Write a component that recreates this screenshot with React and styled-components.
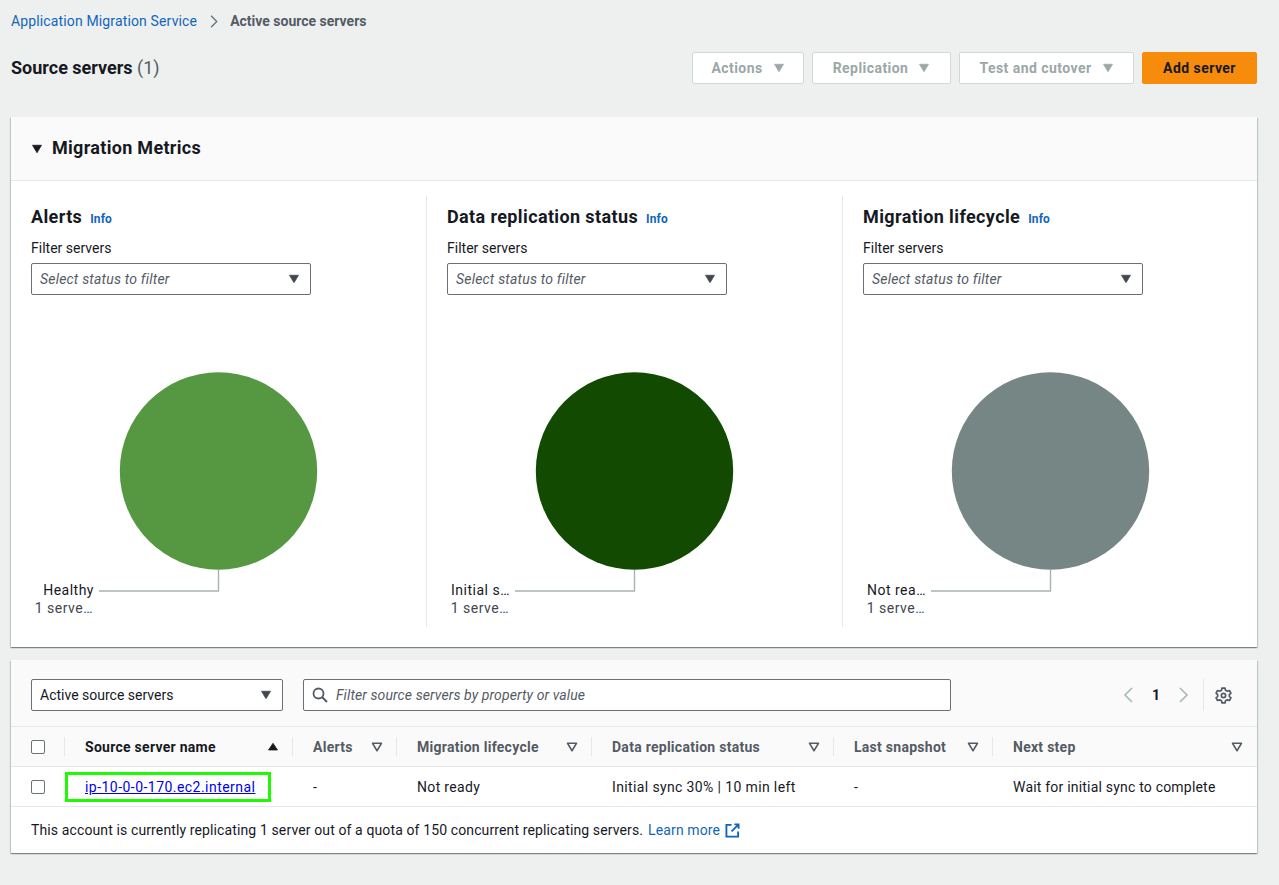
import React from 'react';
import styled, { createGlobalStyle } from 'styled-components';

const GlobalStyle = createGlobalStyle`
  html, body {
    margin: 0;
    padding: 0;
    background: #eef0f0;
    font-family: Roboto, "Liberation Sans", sans-serif;
    font-size: 14px;
    color: #16191f;
  }
`;

const Page = styled.div`
  width: 1279px;
  height: 885px;
  box-sizing: border-box;
  padding: 0 22px 0 11px;
  overflow: hidden;
`;

const Breadcrumbs = styled.nav`
  height: 42px;
  display: flex;
  align-items: center;
  gap: 10px;
  font-size: 14px;
`;

const Crumb = styled.a`
  color: #1166bb;
  letter-spacing: 0.14px;
`;

const CurrentCrumb = styled.span`
  color: #545b64;
  font-weight: 700;
`;

const Header = styled.header`
  height: 32px;
  margin: 10px 0 33px;
  display: flex;
  align-items: center;
  justify-content: space-between;
`;

const Title = styled.h1`
  margin: 0 0 2px;
  font-size: 18px;
  font-weight: 700;
  span {
    font-weight: 400;
    color: #545b64;
  }
`;

const Actions = styled.div`
  display: flex;
  gap: 8px;
`;

const Button = styled.button`
  box-sizing: border-box;
  height: 32px;
  width: ${p => p.$width}px;
  display: flex;
  align-items: center;
  justify-content: center;
  gap: 10px;
  font: 700 14px Roboto, sans-serif;
  letter-spacing: 0.45px;
  border-radius: 2px;
  border: 1px solid ${p => (p.$primary ? '#f78b0c' : '#d3d8d9')};
  background: ${p => (p.$primary ? '#f78b0c' : '#fff')};
  color: ${p => (p.$primary ? '#16191f' : '#9ba7a8')};
`;

const Panel = styled.section`
  background: #fff;
  box-shadow: 0 1px 1px 0 rgba(0, 28, 36, 0.3), 1px 1px 1px 0 rgba(0, 28, 36, 0.15), -1px 1px 1px 0 rgba(0, 28, 36, 0.15);
  margin-bottom: 13px;
`;

const PanelHead = styled.div`
  height: 63px;
  box-sizing: content-box;
  background: #fafafa;
  border-bottom: 1px solid #e6e8e8;
  display: flex;
  align-items: center;
  gap: 9px;
  padding-left: 20px;
`;

const PanelTitle = styled.h2`
  margin: 0 0 2px;
  font-size: 18px;
  font-weight: 700;
  letter-spacing: 0.3px;
`;

const Metrics = styled.div`
  display: grid;
  grid-template-columns: repeat(3, 416px);
  padding: 15px 0 20px;
`;

const MetricCol = styled.div`
  box-sizing: border-box;
  height: 431px;
  padding-left: 20px;
  border-right: ${p => (p.$last ? 'none' : '1px solid #e6e8e8')};
`;

const MetricTitle = styled.div`
  display: flex;
  align-items: baseline;
  gap: 8px;
  font-size: 18px;
  font-weight: 700;
  letter-spacing: 0.38px;
  line-height: 22px;
  margin-top: 10px;
`;

const InfoLink = styled.a`
  font-size: 12px;
  font-weight: 700;
  letter-spacing: 0.1px;
  color: #1166bb;
`;

const FieldLabel = styled.div`
  font-size: 14px;
  line-height: 20px;
  margin: 8px 0 5px;
`;

const Select = styled.div`
  box-sizing: border-box;
  width: ${p => p.$width}px;
  height: 32px;
  background: #fff;
  border: 1px solid #687078;
  border-radius: 2px;
  display: flex;
  align-items: center;
  justify-content: space-between;
  padding: 0 10px 0 8px;
  font-size: 14px;
  font-style: ${p => (p.$placeholder ? 'italic' : 'normal')};
  letter-spacing: ${p => (p.$placeholder ? '0.2px' : '0')};
  color: ${p => (p.$placeholder ? '#545b64' : '#16191f')};
`;

const ChartSvg = styled.svg`
  display: block;
  width: 376px;
  height: 332px;
  overflow: visible;
`;

const ChartLabel = styled.text`
  font-family: Roboto, sans-serif;
  font-size: 14px;
  letter-spacing: 0.5px;
  text-anchor: end;
  fill: ${p => p.$color};
`;

const Toolbar = styled.div`
  height: 67px;
  box-sizing: border-box;
  background: #fafafa;
  border-bottom: 1px solid #e6e8e8;
  display: flex;
  align-items: center;
  padding: 4px 25px 0 20px;
`;

const SearchBox = styled.div`
  box-sizing: border-box;
  width: 648px;
  height: 32px;
  margin-left: 20px;
  background: #fff;
  border: 1px solid #687078;
  border-radius: 2px;
  display: flex;
  align-items: center;
  gap: 8px;
  padding-left: 8px;
  font-style: italic;
  letter-spacing: 0.1px;
  color: #545b64;
`;

const Pager = styled.div`
  margin-left: auto;
  display: flex;
  align-items: center;
  font-weight: 700;
  gap: 15px;
`;

const Settings = styled.div`
  height: 32px;
  margin-left: 12px;
  padding-left: 11px;
  border-left: 1px solid #e6e8e8;
  display: flex;
  align-items: center;
`;

const Row = styled.div`
  display: grid;
  grid-template-columns: 54px 228px 104px 195px 242px 159px 264px;
  height: 40px;
  box-sizing: border-box;
  background: ${p => (p.$head ? '#fafafa' : '#fff')};
  border-bottom: 1px solid #e6e8e8;
`;

const HeadCell = styled.div`
  position: relative;
  display: flex;
  align-items: center;
  justify-content: space-between;
  padding: 0 14px 0 20px;
  font-weight: 700;
  letter-spacing: 0.27px;
  color: ${p => (p.$sorted ? '#16191f' : '#545b64')};
  &::after {
    content: '';
    position: absolute;
    right: 0;
    top: 10px;
    bottom: 10px;
    border-right: 1px solid #e6e8e8;
    display: ${p => (p.$last ? 'none' : 'block')};
  }
`;

const Cell = styled.div`
  display: flex;
  align-items: center;
  padding-left: ${p => (p.$flush ? 0 : 20)}px;
  letter-spacing: ${p => p.$spacing ?? 0.2}px;
`;

const CheckCell = styled.div`
  display: flex;
  align-items: center;
  padding-left: 20px;
`;

const Checkbox = styled.span`
  box-sizing: border-box;
  width: 14px;
  height: 14px;
  background: #fff;
  border: 1px solid #687078;
  border-radius: 2px;
`;

const Highlight = styled.div`
  box-sizing: border-box;
  width: 206px;
  height: 30px;
  border: 3px solid #1dfa04;
  display: flex;
  align-items: center;
  padding-left: 17px;
  a {
    color: #0000ee;
    letter-spacing: 0.46px;
    text-decoration: underline;
  }
`;

const Footer = styled.div`
  height: 46px;
  display: flex;
  align-items: center;
  padding-left: 20px;
  gap: 5px;
  letter-spacing: 0.12px;
  a {
    color: #1166bb;
  }
`;

const Icon = styled.svg`
  flex: none;
`;

const Triangle = ({ up, color = '#545b64', size = 12, outline }) => (
  <Icon width={size} height={size} viewBox="0 0 16 16">
    <path
      d={up ? 'M8 3 L14 12 H2 Z' : 'M2 3 H14 L8 13 Z'}
      fill={outline ? 'none' : color}
      stroke={color}
      strokeWidth={outline ? 2 : 1}
      strokeLinejoin="round"
    />
  </Icon>
);

const Chevron = ({ dir, color, size = 16 }) => (
  <Icon width={size} height={size} viewBox="0 0 16 16">
    <path d={dir === 'left' ? 'M11 1 L4 8 L11 15' : 'M5 1 L12 8 L5 15'} fill="none" stroke={color} strokeWidth="1.6" />
  </Icon>
);

const SearchIcon = () => (
  <Icon width="16" height="16" viewBox="0 0 16 16">
    <circle cx="6.5" cy="6.5" r="5" fill="none" stroke="#545b64" strokeWidth="1.8" />
    <path d="M10 10 L15 15" stroke="#545b64" strokeWidth="2" />
  </Icon>
);

const GearIcon = () => (
  <Icon width="17" height="17" viewBox="0 0 16 16">
    <path
      d="M6.6 1 H9.4 L9.9 3 L11.6 3.9 L13.6 3.3 L15 5.7 L13.5 7.1 V8.9 L15 10.3 L13.6 12.7 L11.6 12.1 L9.9 13 L9.4 15 H6.6 L6.1 13 L4.4 12.1 L2.4 12.7 L1 10.3 L2.5 8.9 V7.1 L1 5.7 L2.4 3.3 L4.4 3.9 L6.1 3 Z"
      fill="none"
      stroke="#545b64"
      strokeWidth="1.6"
      strokeLinejoin="round"
    />
    <circle cx="8" cy="8" r="2" fill="none" stroke="#545b64" strokeWidth="1.6" />
  </Icon>
);

const ExternalIcon = () => (
  <Icon width="15" height="15" viewBox="0 0 16 16">
    <path d="M7 2 H1.5 V14.5 H14 V9" fill="none" stroke="#1166bb" strokeWidth="2" />
    <path d="M10 1.5 H14.5 V6 M14.5 1.5 L7 9" fill="none" stroke="#1166bb" strokeWidth="2" />
  </Icon>
);

const metrics = [
  { title: 'Alerts', color: '#569842', label: 'Healthy' },
  { title: 'Data replication status', color: '#134a02', label: 'Initial s…' },
  { title: 'Migration lifecycle', color: '#768685', label: 'Not rea…' },
];

const columns = [
  { name: 'Source server name', sorted: true },
  { name: 'Alerts' },
  { name: 'Migration lifecycle' },
  { name: 'Data replication status' },
  { name: 'Last snapshot' },
  { name: 'Next step', last: true },
];

function Metric({ title, color, label, last }) {
  return (
    <MetricCol $last={last}>
      <MetricTitle>
        {title} <InfoLink>Info</InfoLink>
      </MetricTitle>
      <FieldLabel>Filter servers</FieldLabel>
      <Select $width={280} $placeholder>
        Select status to filter
        <Triangle color="#414750" />
      </Select>
      <ChartSvg viewBox="0 0 376 332">
        <circle cx="187.5" cy="176" r="98.7" fill={color} />
        <path d="M187.5 275 V296 H68" fill="none" stroke="#a9b2b4" strokeWidth="1.4" />
        <ChartLabel x="63" y="300" $color="#16191f">{label}</ChartLabel>
        <ChartLabel x="62" y="318" $color="#414750">1 serve…</ChartLabel>
      </ChartSvg>
    </MetricCol>
  );
}

export default function App() {
  return (
    <Page>
      <GlobalStyle />
      <Breadcrumbs>
        <Crumb>Application Migration Service</Crumb>
        <Chevron dir="right" color="#687078" size={13} />
        <CurrentCrumb>Active source servers</CurrentCrumb>
      </Breadcrumbs>

      <Header>
        <Title>Source servers <span>(1)</span></Title>
        <Actions>
          <Button $width={112}>Actions <Triangle color="#9ba7a8" /></Button>
          <Button $width={139}>Replication <Triangle color="#9ba7a8" /></Button>
          <Button $width={175}>Test and cutover <Triangle color="#9ba7a8" /></Button>
          <Button $width={115} $primary>Add server</Button>
        </Actions>
      </Header>

      <Panel>
        <PanelHead>
          <Triangle color="#16191f" />
          <PanelTitle>Migration Metrics</PanelTitle>
        </PanelHead>
        <Metrics>
          {metrics.map((m, i) => (
            <Metric key={m.title} {...m} last={i === 2} />
          ))}
        </Metrics>
      </Panel>

      <Panel>
        <Toolbar>
          <Select $width={252}>
            Active source servers
            <Triangle color="#414750" />
          </Select>
          <SearchBox>
            <SearchIcon />
            Filter source servers by property or value
          </SearchBox>
          <Pager>
            <Chevron dir="left" color="#aab7b8" />
            1
            <Chevron dir="right" color="#aab7b8" />
          </Pager>
          <Settings>
            <GearIcon />
          </Settings>
        </Toolbar>
        <Row $head>
          <HeadCell>
            <Checkbox />
          </HeadCell>
          {columns.map(c => (
            <HeadCell key={c.name} $sorted={c.sorted} $last={c.last}>
              {c.name}
              {c.sorted ? <Triangle up color="#16191f" /> : <Triangle outline />}
            </HeadCell>
          ))}
        </Row>
        <Row>
          <CheckCell><Checkbox /></CheckCell>
          <Cell $flush>
            <Highlight><a>ip-10-0-0-170.ec2.internal</a></Highlight>
          </Cell>
          <Cell>-</Cell>
          <Cell $spacing={0.33}>Not ready</Cell>
          <Cell $spacing={0.37}>Initial sync 30% | 10 min left</Cell>
          <Cell>-</Cell>
          <Cell>Wait for initial sync to complete</Cell>
        </Row>
        <Footer>
          This account is currently replicating 1 server out of a quota of 150 concurrent replicating servers.
          <a>Learn more</a>
          <ExternalIcon />
        </Footer>
      </Panel>
    </Page>
  );
}
